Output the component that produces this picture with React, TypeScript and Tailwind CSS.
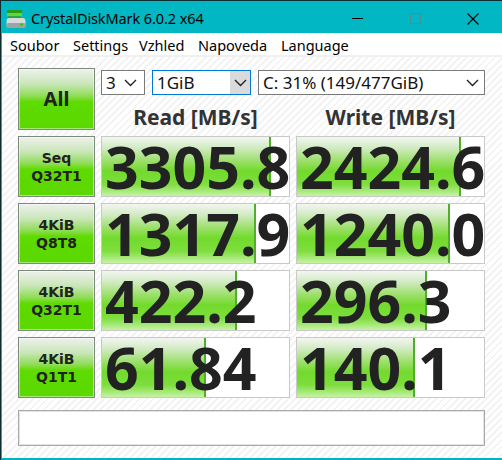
import React from "react";

type Row = {
  top: string;
  bottom: string;
  read: string;
  readBar: number;
  write: string;
  writeBar: number;
};

// bar widths measured against a 189px cell
const rows: Row[] = [
  { top: "Seq", bottom: "Q32T1", read: "3305.8", readBar: 169, write: "2424.6", writeBar: 164 },
  { top: "4KiB", bottom: "Q8T8", read: "1317.9", readBar: 154, write: "1240.0", writeBar: 153 },
  { top: "4KiB", bottom: "Q32T1", read: "422.2", readBar: 135, write: "296.3", writeBar: 130 },
  { top: "4KiB", bottom: "Q1T1", read: "61.84", readBar: 104, write: "140.1", writeBar: 118 },
];

const greenButton =
  "border border-[#7b8a7b] bg-[linear-gradient(to_bottom,#eef1ec_0%,#c9e6b8_25%,#8fdc55_45%,#5edc00_55%,#5ad800_100%)] shadow-[inset_0_0_0_1px_rgba(255,255,255,0.45)] text-[#222]";

function AppIcon() {
  return (
    <svg width="20" height="20" viewBox="0 0 20 20">
      <rect x="1" y="1" width="15" height="3" fill="#2f9a1a" />
      <rect x="1" y="4" width="15" height="3.5" fill="#5fd83a" />
      <rect x="2" y="7.5" width="13" height="1" fill="#2e8a18" />
      <rect x="0.5" y="9" width="19" height="10" rx="3" fill="#d7dadb" />
      <rect x="0.5" y="14" width="19" height="5" rx="2" fill="#9ea3a5" />
      <rect x="14" y="14.5" width="3" height="2" fill="#39c21a" />
    </svg>
  );
}

function Chevron() {
  return (
    <svg width="13" height="8" viewBox="0 0 13 8">
      <path d="M1 1 L6.5 6.5 L12 1" fill="none" stroke="#222" strokeWidth="1.4" />
    </svg>
  );
}

function Cell({ value, bar }: { value: string; bar: number }) {
  return (
    <div className="relative h-[61px] overflow-hidden border border-[#c9c9c9] bg-white">
      <div
        className="absolute left-0 top-0 h-full border-r-2 border-[#4fae2a] bg-[linear-gradient(to_bottom,#f3f6f1_0%,#d2ebc4_18%,#98df64_42%,#72da2c_58%,#7ede3e_80%,#c6f2a4_100%)]"
        style={{ width: bar }}
      />
      <div className="relative flex h-full items-center pl-[3px] font-['Noto_Sans',sans-serif] text-[59px] font-bold leading-[59px] text-[#222]">
        {value}
      </div>
    </div>
  );
}

export default function App() {
  return (
    <div className="h-[460px] w-[502px] overflow-hidden bg-[#0e2d33] pl-[1px] pt-[1px]">
      <div className="flex h-full flex-col border-b-2 border-l border-[#00b4c2] bg-white">
        {/* title bar */}
        <div className="flex h-[32px] items-center bg-[#00b7c3] pt-[3px] font-['Noto_Sans',sans-serif] text-[14.5px] text-black">
          <div className="ml-[4px] mr-[5px]">
            <AppIcon />
          </div>
          <span className="tracking-[-0.1px]">CrystalDiskMark 6.0.2 x64</span>
          <div className="ml-auto flex items-center">
            <div className="flex w-[58px] justify-center">
              <div className="h-[1px] w-[11px] bg-black" />
            </div>
            <div className="flex w-[58px] justify-center">
              <div className="h-[11px] w-[11px] border border-[#4a8f94]" />
            </div>
            <div className="flex w-[58px] justify-center">
              <svg width="12" height="12" viewBox="0 0 12 12">
                <path d="M0.5 0.5 L11.5 11.5 M11.5 0.5 L0.5 11.5" stroke="#000" strokeWidth="1.1" />
              </svg>
            </div>
          </div>
        </div>

        {/* menu */}
        <div className="flex h-[24px] items-center border-b-2 border-[#f0f0f0] pl-[8px] pt-[3px] font-['Noto_Sans',sans-serif] text-[14.5px] text-black">
          <span className="w-[63px]">Soubor</span>
          <span className="w-[66px]">Settings</span>
          <span className="w-[59px]">Vzhled</span>
          <span className="w-[83px]">Napoveda</span>
          <span>Language</span>
        </div>

        {/* client */}
        <div className="flex-1 bg-[repeating-linear-gradient(135deg,#ffffff_0px,#ffffff_3px,#f3f3f3_3px,#f3f3f3_5px)] pl-[16px] pt-[11px]">
          <div className="grid grid-cols-[77px_189px_189px] gap-x-[6px] gap-y-[6px]">
            <div
              className={`flex h-[62px] items-center justify-center font-['Noto_Sans',sans-serif] text-[20px] font-bold ${greenButton}`}
            >
              All
            </div>
            <div className="col-span-2 flex flex-col">
              <div className="mt-[2px] flex h-[25px] gap-[7px] font-['Noto_Sans',sans-serif] text-[17px] text-[#111]">
                <div className="flex w-[44px] items-center justify-between border border-[#7a7a7a] bg-white pl-[4px] pr-[7px]">
                  <span>3</span>
                  <Chevron />
                </div>
                <div className="flex w-[99px] items-center border border-[#0078d7] bg-white pl-[4px]">
                  <span className="flex-1">1GiB</span>
                  <div className="flex h-full w-[20px] items-center justify-center bg-[#dadada]">
                    <Chevron />
                  </div>
                </div>
                <div className="flex w-[227px] items-center justify-between border border-[#7a7a7a] bg-white pl-[4px] pr-[5px]">
                  <span>C: 31% (149/477GiB)</span>
                  <Chevron />
                </div>
              </div>
              <div className="grid flex-1 grid-cols-[189px_189px] items-end gap-x-[6px] font-['Noto_Sans',sans-serif] text-[21px] font-bold leading-[26px] text-[#333]">
                <div className="text-center">Read [MB/s]</div>
                <div className="text-center">Write [MB/s]</div>
              </div>
            </div>

            {rows.map((r, i) => (
              <React.Fragment key={i}>
                <div
                  className={`flex h-[61px] flex-col items-center justify-center font-['DejaVu_Sans',sans-serif] text-[14px] font-bold leading-[18px] ${greenButton}`}
                >
                  <span>{r.top}</span>
                  <span>{r.bottom}</span>
                </div>
                <Cell value={r.read} bar={r.readBar} />
                <Cell value={r.write} bar={r.writeBar} />
              </React.Fragment>
            ))}
          </div>

          {/* status bar */}
          <div className="mt-[12px] h-[36px] w-[467px] border border-[#a9a9a9] bg-white shadow-[inset_0_0_0_1px_#e4e4e4]" />
        </div>
      </div>
    </div>
  );
}
